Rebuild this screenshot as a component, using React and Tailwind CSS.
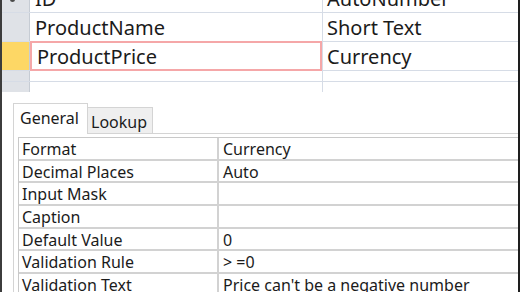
import React from "react"

const font = { fontFamily: '"Noto Sans", "Open Sans", sans-serif' }

function FieldRow({ name, type, selected, cut, icon, h = "h-[29px]" }) {
  return (
    <div className={`flex shrink-0 ${h} border-b border-[#d6dce6] ${cut ? "-mt-[16px]" : ""}`}>
      <div className={`relative w-[28px] shrink-0 border-r border-[#c6ccd4] ${selected ? "bg-[#fdd765]" : "bg-[#dfe2e7]"}`}>
        {icon && <div className="absolute left-[8px] top-[13px] w-[5px] h-[5px] rounded-full bg-[#4a4a4a]" />}
      </div>
      <div className={`w-[292px] shrink-0 flex items-center pl-[5px] pt-[1px] ${selected ? "border-2 border-[#f5a7a8] -my-[1px] pl-[4px]" : ""}`}>
        {name}
      </div>
      <div className="flex-1 flex items-center pl-[4px] pt-[1px] border-l border-[#d6dce6]">{type}</div>
    </div>
  )
}

const props = [
  ["Format", "Currency"],
  ["Decimal Places", "Auto"],
  ["Input Mask", ""],
  ["Caption", ""],
  ["Default Value", "0"],
  ["Validation Rule", "> =0"],
  ["Validation Text", "Price can't be a negative number"],
]

export default function App() {
  return (
    <div className="w-[520px] h-[292px] overflow-hidden bg-white text-[#1b1b1b] flex" style={font}>
      <div className="w-[2px] bg-[#3c3c3c] shrink-0" />
      <div className="flex-1 flex flex-col min-h-0">
        <div className="h-[92px] shrink-0 overflow-hidden text-[20px] leading-none flex flex-col">
          <FieldRow name="ID" type="AutoNumber" cut icon />
          <FieldRow name="ProductName" type="Short Text" />
          <FieldRow name="ProductPrice" type="Currency" selected />
          <FieldRow name="" type="" h="h-[11px]" />
          <FieldRow name="" type="" />
        </div>
        <div className="flex-1 pl-[11px] pt-[11px] flex flex-col text-[16px] leading-none min-h-0">
          <div className="flex items-end h-[31px] shrink-0">
            <div className="h-[31px] w-[75px] border border-b-0 border-[#d4d4d4] bg-white flex items-center pl-[6px] pb-[2px]">General</div>
            <div className="h-[27px] w-[65px] border border-l-0 border-[#d4d4d4] bg-[#efefef] flex items-center pl-[3px] pt-[2px]">Lookup</div>
            <div className="flex-1 border-b border-[#d4d4d4]" />
          </div>
          <div className="flex-1 border-l border-[#d4d4d4] pl-[4px] pt-[3px]">
            <div className="border-t border-l border-[#c9c9c9]">
              {props.map(([k, v]) => (
                <div key={k} className="flex shrink-0 h-[22.7px] border-b-2 border-[#d2d2d2]">
                  <div className="w-[200px] shrink-0 border-r-2 border-[#d2d2d2] flex items-center pl-[3px] pt-[1px]">{k}</div>
                  <div className="flex-1 flex items-center pl-[4px] pt-[1px]">{v}</div>
                </div>
              ))}
            </div>
          </div>
        </div>
      </div>
      <div className="w-[2px] bg-[#1e1e1e] shrink-0" />
    </div>
  )
}
